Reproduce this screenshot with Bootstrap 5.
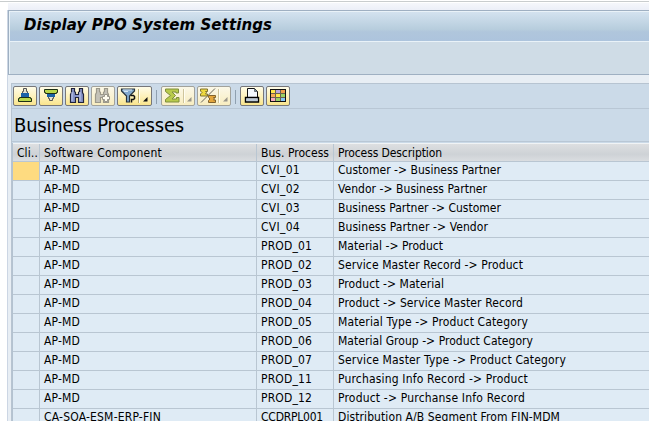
<!DOCTYPE html>
<html lang="en">
<head>
<meta charset="utf-8">
<title>Display PPO System Settings</title>
<link rel="stylesheet" href="https://cdn.jsdelivr.net/npm/bootstrap@5.3.0/dist/css/bootstrap.min.css">
<style>
body{background:#fff;color:#000;font-family:"DejaVu Sans Condensed","DejaVu Sans",sans-serif;font-stretch:condensed;font-size:12px;height:421px;width:649px;overflow:hidden}
.topline{height:3px;background:linear-gradient(#fff 1px,#c9cdce 1px,#c9cdce 2px,#fff 2px)}
.topband{height:7px;margin-left:8px;background:linear-gradient(#f5f7fb,#eceff8)}
.window-area{margin-left:7px;border-left:1px solid #ccd6e4;background:#e8eef4;height:411px}
.title-panel{height:65px;border:1px solid #9fb0c2;border-right:0;background:#cfdce6}
.title-bar{height:31px;border:1px solid #e9f2f8;border-width:1px 0 1px 1px;background:linear-gradient(#d3e2ef,#b7cddd 60%,#b0c6dc 68%,#adc4dd);font-family:"DejaVu Sans",sans-serif;font-stretch:normal;font-size:15px;font-weight:700;font-style:italic;line-height:26px;padding-left:14px}
.sub-bar{border-left:1px solid #e9f2f8;height:32px}
.grid-panel{margin:8px 0 0 3px;border:1px solid #b7c4d1;border-right:0;background:#cbdae8;height:340px}
.tools{height:25px;border-bottom:1px solid #b9c7d5;padding:2px 0 0 1px}
.tool{width:24px;height:20px;border:1px solid #77777a;border-radius:2px;background:linear-gradient(#fffce8,#fdf0b4 60%,#f9e48c);margin-right:2px;flex:none}
.tool svg{display:block;width:100%;height:18px}
.wide{width:35px}
.wide-s{width:34px}
.dim{border-color:#a2a29b;background:linear-gradient(#fbf8e8,#f8edc0)}
.sep{width:1px;height:14px;background:#8fa0b0;margin:4px 4px 0 2px}
.list-title{height:33px;font-size:20px;line-height:33px;padding-left:2px;border-bottom:1px solid #b9c7d5}
.grid-table{border-left:1px solid #b4c2d0;width:637px}
.line{display:grid;grid-template-columns:27px 217px 77px 1fr;height:19px;border-bottom:1px solid #b9c6d2;background:#dfebf5;line-height:16px}
.line>div{border-right:1px solid #b9c6d2;padding-left:4px;white-space:nowrap;overflow:hidden}
.line>div:last-child{border:0}
.line.head{margin-top:1px;border-top:1px solid #f0f3f5;background:linear-gradient(#dddfe1,#ced2d6 60%,#dadde0);line-height:18px}
.line>.picked{background:#fedb80;border-right-color:#b9c6d2}
</style>
<script src="https://cdn.jsdelivr.net/npm/bootstrap@5.3.0/dist/js/bootstrap.bundle.min.js"></script>
</head>
<body>
<div class="topline"></div><div class="topband"></div>
<main class="window-area">
<section class="title-panel"><div class="title-bar text-nowrap"><span data-w="248">Display PPO System Settings</span></div><div class="sub-bar"></div></section>
<section class="grid-panel">
<div class="tools d-flex">
<div class="tool"><svg viewBox="0 0 22 18"><path d="M9.500 1.500h3v3h1v2h-5v-2h1z" fill="#e4e2d0" stroke="#555"/><path d="M7 6h8v4h-8z" fill="#1b62a8"/><path d="M5.500 10.500h11v1h1v3h-13v-3h1z" fill="#b9d84c" stroke="#1d2f14"/></svg></div>
<div class="tool"><svg viewBox="0 0 22 18"><path d="M8.500 9.500h5v2h-1v2h-3v-2h-1z" fill="#e4e2d0" stroke="#555"/><path d="M7 6h8v4h-8z" fill="#1b62a8"/><path d="M4.500 2.500h13v3h-1v1h-11v-1h-1z" fill="#b9d84c" stroke="#1d2f14"/></svg></div>
<div class="tool"><svg viewBox="0 0 22 18"><path d="M5.500 1.500h3v3l1 1v2h3v-2l1-1v-3h3v4l1 2v8h-5v-5h-3v5h-5v-8l1-2z" fill="#8794c8" stroke="#20233a" stroke-width="1.200"/><path d="M6 5v9M14 5v9" stroke="#c4cdee"/></svg></div>
<div class="tool dim"><svg viewBox="0 0 22 18"><path d="M4.500 1.500h3v3l1 1v2h3v-2l1-1v-3h3v4l1 2v8h-5v-5h-3v5h-5v-8l1-2z" fill="#c4c2b8" stroke="#9c998a" stroke-width="1.200"/><path d="M12.500 7.500h3v2h2v3h-2v2h-3v-2h-2v-3h2z" fill="#fffdf0" stroke="#99968a"/></svg></div>
<div class="tool wide"><svg viewBox="0 0 33 18"><path d="M3.500 2h13v2l-5 5v6h-3v-6l-5-5z" fill="#82a9cf" stroke="#26323c" stroke-width="1.200"/><path d="M5 3h9M6 4.500h4" stroke="#d6e8f5"/><path d="M12.500 8.500h3l1 1v2l-1 1h-2v3" fill="none" stroke="#111" stroke-width="1.500"/><path d="M20.500 2v14" stroke="#bcae72"/><path d="M21.500 2v14" stroke="#fffef2"/><path d="M29.500 10v4.500h-4.500z" fill="#111"/></svg></div>
<div class="sep"></div>
<div class="tool wide-s dim"><svg viewBox="0 0 32 18"><path d="M3.500 2h13v4h-2.500v-1h-4l3.500 3.500-3.500 3.500h4.500v-1.500h2.500v4.500h-13.500v-2.500l5-4-5-4z" fill="#b8ca4c" stroke="#7f8e3c"/><path d="M21.500 2v14" stroke="#cfc59c"/><path d="M22.500 2v14" stroke="#fffef2"/><path d="M29.500 10v4.500h-4.500z" fill="#99968a"/></svg></div>
<div class="tool wide-s dim"><svg viewBox="0 0 32 18"><path d="M3 15.500L17 1.500" stroke="#68655a"/><path d="M2.500 2h7v2.500h-2l1 1-1 1.500h2v2h-7v-2l1.500-1.500-1.500-1.500z" fill="#eed93f" stroke="#807330"/><path d="M10.500 8.500h7v2h-2l1 1.500-1 1h2v2.500h-7v-2l1.500-1.500-1.500-1.500z" fill="#e5a63c" stroke="#80622e"/><path d="M20.500 2v14" stroke="#cfc59c"/><path d="M21.500 2v14" stroke="#fffef2"/><path d="M29.500 10v4.500h-4.500z" fill="#99968a"/></svg></div>
<div class="sep"></div>
<div class="tool"><svg viewBox="0 0 22 18"><path d="M6.500 1.500h7l3 3v6h-10z" fill="#f4f9ff" stroke="#111"/><path d="M13.500 1.500v3h3z" fill="#7591a5" stroke="#333" stroke-width=".6"/><path d="M4.500 10.500h13v4.500h-13z" fill="#dfe9f3" stroke="#000" stroke-width="1.400"/><path d="M6 13h10" stroke="#9ab"/></svg></div>
<div class="tool"><svg viewBox="0 0 22 18"><path d="M3 2h16v13h-16z" fill="#111"/><path d="M4 3h14v11h-14z" fill="#6b624c"/><path d="M4 3h4v3h-4z" fill="#ffe74a"/><path d="M9 3h4v3h-4z" fill="#b9a7dc"/><path d="M14 3h4v3h-4z" fill="#f0a04c"/><path d="M4 7h4v3h-4z" fill="#f6aa58"/><path d="M9 7h4v3h-4z" fill="#ffe74a"/><path d="M14 7h4v3h-4z" fill="#9bd263"/><path d="M4 11h4v3h-4z" fill="#f6a9c0"/><path d="M9 11h4v3h-4z" fill="#98d06a"/><path d="M14 11h4v3h-4z" fill="#85c5f4"/></svg></div>
</div>
<div class="list-title"><span data-w="170">Business Processes</span></div>
<div class="grid-table">
<div class="line head"><div><span data-w="21">Cli‥</span></div><div><span data-w="118">Software Component</span></div><div><span data-w="68">Bus. Process</span></div><div><span data-w="104">Process Description</span></div></div>
<div class="line"><div class="picked"></div><div><span data-w="36">AP-MD</span></div><div><span data-w="39">CVI_01</span></div><div><span data-w="163">Customer -&gt; Business Partner</span></div></div>
<div class="line"><div></div><div><span data-w="36">AP-MD</span></div><div><span data-w="39">CVI_02</span></div><div><span data-w="149">Vendor -&gt; Business Partner</span></div></div>
<div class="line"><div></div><div><span data-w="36">AP-MD</span></div><div><span data-w="39">CVI_03</span></div><div><span data-w="163">Business Partner -&gt; Customer</span></div></div>
<div class="line"><div></div><div><span data-w="36">AP-MD</span></div><div><span data-w="39">CVI_04</span></div><div><span data-w="150">Business Partner -&gt; Vendor</span></div></div>
<div class="line"><div></div><div><span data-w="36">AP-MD</span></div><div><span data-w="51">PROD_01</span></div><div><span data-w="105">Material -&gt; Product</span></div></div>
<div class="line"><div></div><div><span data-w="36">AP-MD</span></div><div><span data-w="51">PROD_02</span></div><div><span data-w="185">Service Master Record -&gt; Product</span></div></div>
<div class="line"><div></div><div><span data-w="36">AP-MD</span></div><div><span data-w="51">PROD_03</span></div><div><span data-w="106">Product -&gt; Material</span></div></div>
<div class="line"><div></div><div><span data-w="36">AP-MD</span></div><div><span data-w="51">PROD_04</span></div><div><span data-w="185">Product -&gt; Service Master Record</span></div></div>
<div class="line"><div></div><div><span data-w="36">AP-MD</span></div><div><span data-w="51">PROD_05</span></div><div><span data-w="190">Material Type -&gt; Product Category</span></div></div>
<div class="line"><div></div><div><span data-w="36">AP-MD</span></div><div><span data-w="51">PROD_06</span></div><div><span data-w="195">Material Group -&gt; Product Category</span></div></div>
<div class="line"><div></div><div><span data-w="36">AP-MD</span></div><div><span data-w="51">PROD_07</span></div><div><span data-w="228">Service Master Type -&gt; Product Category</span></div></div>
<div class="line"><div></div><div><span data-w="36">AP-MD</span></div><div><span data-w="51">PROD_11</span></div><div><span data-w="190">Purchasing Info Record -&gt; Product</span></div></div>
<div class="line"><div></div><div><span data-w="36">AP-MD</span></div><div><span data-w="51">PROD_12</span></div><div><span data-w="187">Product -&gt; Purchanse Info Record</span></div></div>
<div class="line"><div></div><div><span data-w="117">CA-SOA-ESM-ERP-FIN</span></div><div><span data-w="62">CCDRPL001</span></div><div><span data-w="222">Distribution A/B Segment From FIN-MDM</span></div></div>
</div>
</section>
</main>
<script>
// Track each label to its nominal width
document.querySelectorAll('[data-w]').forEach(e=>{
  const w=e.getBoundingClientRect().width;
  e.style.letterSpacing=((+e.dataset.w-w)/e.textContent.length)+'px';
});
</script>
</body>
</html>
